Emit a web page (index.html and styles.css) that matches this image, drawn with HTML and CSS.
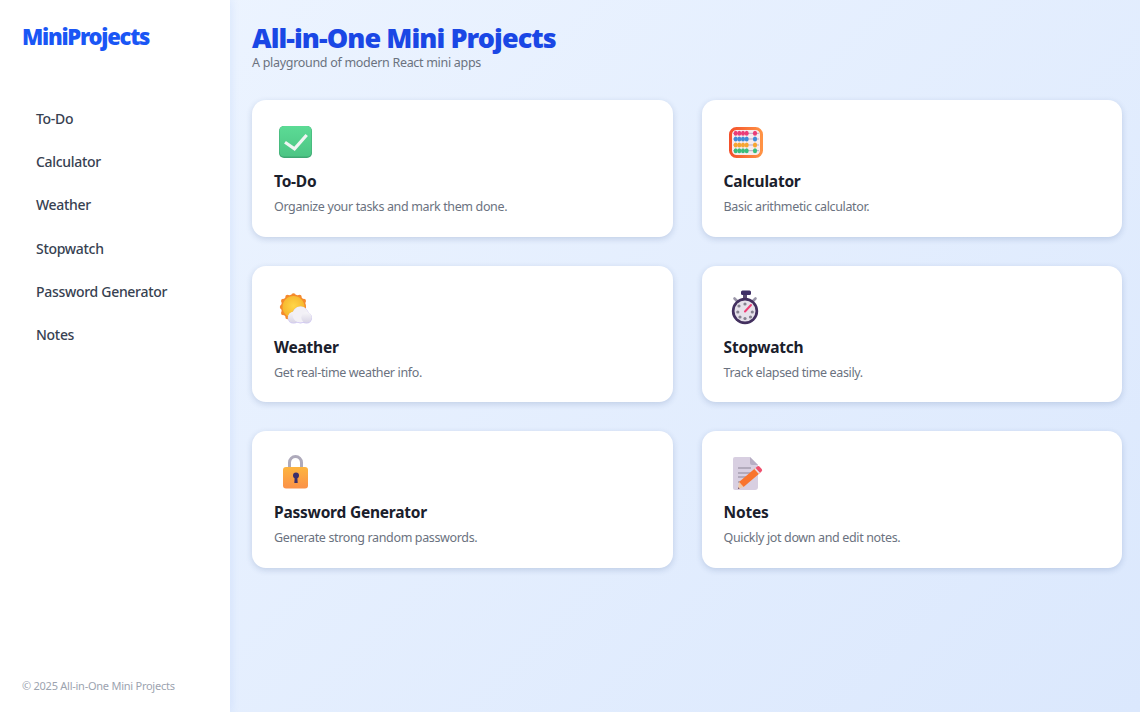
FILE: index.html
```html
<!DOCTYPE html>
<html lang="en">
<head>
    <meta charset="UTF-8">
    <meta name="viewport" content="width=device-width, initial-scale=1.0">
    <title>All-in-One Mini Projects</title>
    <link rel="stylesheet" href="styles.css">
</head>
<body>
    <aside class="sidebar">
        <div class="logo">MiniProjects</div>
        <nav class="nav">
            <a href="#">To-Do</a>
            <a href="#">Calculator</a>
            <a href="#">Weather</a>
            <a href="#">Stopwatch</a>
            <a href="#">Password Generator</a>
            <a href="#">Notes</a>
        </nav>
        <div class="copy">© 2025 All-in-One Mini Projects</div>
    </aside>
    <main class="main">
        <h1>All-in-One Mini Projects</h1>
        <p class="sub">A playground of modern React mini apps</p>
        <div class="grid">
            <div class="card">
                <svg class="icon" viewBox="0 0 36 36">
                    <defs>
                        <linearGradient id="g1" x1="0" y1="0" x2="0" y2="1"><stop offset="0" stop-color="#5cdb95"/><stop offset="1" stop-color="#4cc584"/></linearGradient>
                    </defs>
                    <rect x="1" y="2" width="33" height="32" rx="5" fill="#3fa873"/>
                    <rect x="1.5" y="2" width="32" height="30.5" rx="4.5" fill="url(#g1)"/>
                    <path d="M7 18.3l9.5 6.5L28.7 11" fill="none" stroke="#f1f5f3" stroke-width="3.2"/>
                </svg>
                <h3>To-Do</h3>
                <p>Organize your tasks and mark them done.</p>
            </div>
            <div class="card">
                <svg class="icon" viewBox="0 0 36 36">
                    <defs>
                        <linearGradient id="g2" x1="0" y1="0" x2="1" y2="0"><stop offset="0" stop-color="#f4512b"/><stop offset="1" stop-color="#ff9345"/></linearGradient>
                    </defs>
                    <rect x="2.5" y="4.5" width="31" height="28" rx="6" fill="#f7ecef" stroke="url(#g2)" stroke-width="3"/>
                    <g stroke="#b9a9c9" stroke-width="1"><path d="M5 9.3h26M5 15h26M5 21h26M5 26.7h26"/></g>
                    <g fill="#ea3c78"><ellipse cx="7.7" cy="9.3" rx="2" ry="2.5"/><ellipse cx="11.3" cy="9.3" rx="2" ry="2.5"/><ellipse cx="15" cy="9.3" rx="2" ry="2.5"/><ellipse cx="18.7" cy="9.3" rx="2" ry="2.5"/><ellipse cx="27" cy="9.3" rx="2.1" ry="2.5"/></g>
                    <g fill="#3f8bd8"><ellipse cx="7.7" cy="15" rx="2" ry="2.5"/><ellipse cx="11.3" cy="15" rx="2" ry="2.5"/><ellipse cx="15" cy="15" rx="2" ry="2.5"/><ellipse cx="18.7" cy="15" rx="2" ry="2.5"/><ellipse cx="27" cy="15" rx="2.1" ry="2.5"/></g>
                    <g fill="#f6a531"><ellipse cx="7.7" cy="21" rx="2" ry="2.5"/><ellipse cx="11.3" cy="21" rx="2" ry="2.5"/><ellipse cx="15" cy="21" rx="2" ry="2.5"/><ellipse cx="18.7" cy="21" rx="2" ry="2.5"/><ellipse cx="27" cy="21" rx="2.1" ry="2.5"/></g>
                    <g fill="#39bd7c"><ellipse cx="7.7" cy="26.7" rx="2" ry="2.5"/><ellipse cx="11.3" cy="26.7" rx="2" ry="2.5"/><ellipse cx="15" cy="26.7" rx="2" ry="2.5"/><ellipse cx="18.7" cy="26.7" rx="2" ry="2.5"/><ellipse cx="27" cy="26.7" rx="2.1" ry="2.5"/></g>
                </svg>
                <h3>Calculator</h3>
                <p>Basic arithmetic calculator.</p>
            </div>
            <div class="card">
                <svg class="icon" viewBox="0 0 36 36">
                    <defs>
                        <radialGradient id="g3" cx=".5" cy=".45" r=".55"><stop offset="0" stop-color="#ffd648"/><stop offset="1" stop-color="#f6b52c"/></radialGradient>
                        <linearGradient id="g4" x1="0" y1="0" x2="0" y2="1"><stop offset="0" stop-color="#f6f5f8"/><stop offset="1" stop-color="#d9d5e6"/></linearGradient>
                    </defs>
                    <g fill="#f58a2c"><circle cx="15.5" cy="17" r="12.5"/><circle cx="15.5" cy="5.5" r="2.2"/><circle cx="21.5" cy="7" r="2.2"/><circle cx="25.8" cy="11" r="2.2"/><circle cx="9.5" cy="7" r="2.2"/><circle cx="5.2" cy="11" r="2.2"/><circle cx="4" cy="17" r="2.2"/><circle cx="5.2" cy="23" r="2.2"/><circle cx="9.5" cy="27" r="2.2"/></g>
                    <circle cx="15.5" cy="17" r="11" fill="url(#g3)"/>
                    <circle cx="15.5" cy="27.8" r="5.8" fill="#cfc6f2"/>
                    <circle cx="22.5" cy="25" r="8.4" fill="#cfc6f2"/>
                    <circle cx="28.5" cy="28" r="5.6" fill="#cfc6f2"/>
                    <circle cx="15.5" cy="27.3" r="5.5" fill="url(#g4)"/>
                    <circle cx="22.5" cy="24.6" r="8" fill="#f2f0f6"/>
                    <circle cx="28.5" cy="27.5" r="5.2" fill="url(#g4)"/>
                </svg>
                <h3>Weather</h3>
                <p>Get real-time weather info.</p>
            </div>
            <div class="card">
                <svg class="icon" viewBox="0 0 36 36">
                    <g stroke="#9a96a8" stroke-width="2.6" stroke-linecap="round"><path d="M6.5 8.5l2.5 2.5M27.5 8.5l-2.5 2.5"/></g>
                    <rect x="15" y="3" width="4" height="6" fill="#5b4b72"/>
                    <rect x="13" y="0.5" width="10" height="4.5" rx="1.5" fill="#3f2f66"/>
                    <circle cx="17" cy="21" r="13.2" fill="#43305f"/>
                    <circle cx="17" cy="21" r="10.5" fill="#e6e1ea"/>
                    <g fill="#86828f"><circle cx="17" cy="14" r="1.6"/><circle cx="11" cy="16" r="1.6"/><circle cx="9.8" cy="22" r="1.6"/><circle cx="12" cy="27" r="1.6"/><circle cx="17" cy="28.5" r="1.6"/><circle cx="22.5" cy="27" r="1.6"/><circle cx="24.3" cy="22" r="1.6"/></g>
                    <path d="M17 21.5L23 15" stroke="#ee3f75" stroke-width="2" stroke-linecap="round"/>
                </svg>
                <h3>Stopwatch</h3>
                <p>Track elapsed time easily.</p>
            </div>
            <div class="card">
                <svg class="icon" viewBox="0 0 36 36">
                    <defs>
                        <linearGradient id="g5" x1="0" y1="0" x2="0" y2="1"><stop offset="0" stop-color="#fdb53f"/><stop offset="1" stop-color="#fb9148"/></linearGradient>
                    </defs>
                    <path d="M11.5 14V7.5a6 6 0 0 1 12 0V14" fill="none" stroke="#aeaabb" stroke-width="3"/>
                    <rect x="5" y="12" width="25" height="21.5" rx="3" fill="url(#g5)"/>
                    <circle cx="18" cy="20.5" r="3" fill="#3c2f6b"/>
                    <path d="M16.8 21h2.4l.5 7h-3.4z" fill="#3c2f6b"/>
                </svg>
                <h3>Password Generator</h3>
                <p>Generate strong random passwords.</p>
            </div>
            <div class="card">
                <svg class="icon" viewBox="0 0 36 36">
                    <path d="M5 4a2 2 0 0 1 2-2h15l8 8v22a3 3 0 0 1-3 3H7a2 2 0 0 1-2-2z" fill="#d8cfe1"/>
                    <path d="M22 2l8 8h-6a2 2 0 0 1-2-2z" fill="#b7aec4"/>
                    <path d="M10 13h13M10 18h14M10 22h10M10 27h5" stroke="#8b8598" stroke-width="1.2"/>
                    <path d="M11 27L27.5 13l4.5 5-16.5 14z" fill="#f9742e"/>
                    <path d="M27.5 13l1.7-1.4a1.8 1.8 0 0 1 2.5.2l2 2.3a1.8 1.8 0 0 1-.2 2.5L32 18z" fill="#f0506e"/>
                    <path d="M27.5 13l4.5 5-1.2 1-4.5-5z" fill="#e9dfe6"/>
                    <path d="M11 27l4.5 5-5.5 2z" fill="#f3c9a4"/>
                    <path d="M10.4 32.2l1.2 1.2-1.6.6z" fill="#5b3a5e"/>
                </svg>
                <h3>Notes</h3>
                <p>Quickly jot down and edit notes.</p>
            </div>
        </div>
    </main>
</body>
</html>
```

FILE: styles.css
```css
* {
    box-sizing: border-box;
}

html, body {
    height: 100%;
}

body {
    margin: 0;
    display: flex;
    font-family: "Noto Sans", "Open Sans", sans-serif;
    background: linear-gradient(135deg, #eef5ff 0%, #dbe8fd 100%);
    overflow: hidden;
}

.sidebar {
    width: 230px;
    flex-shrink: 0;
    background: #fff;
    box-shadow: 2px 0 8px rgba(37, 99, 235, 0.08);
    padding: 22px 22px 18px;
    display: flex;
    flex-direction: column;
}

.logo {
    font-size: 22px;
    line-height: 28px;
    font-weight: 900;
    letter-spacing: -1.25px;
    color: #1a56f5;
}

.nav {
    margin-top: 47px;
    padding-left: 14px;
    display: flex;
    flex-direction: column;
    flex: 1;
}

.nav a {
    height: 43.2px;
    line-height: 43px;
    font-size: 14px;
    font-weight: 500;
    letter-spacing: -0.3px;
    color: #374151;
    text-decoration: none;
}

.copy {
    font-size: 11px;
    line-height: 16px;
    letter-spacing: -0.25px;
    color: #9ca3af;
}

.main {
    flex: 1;
    padding: 22px 17.6px 0 22px;
}

h1 {
    margin: 0;
    font-size: 27px;
    line-height: 32px;
    font-weight: 900;
    letter-spacing: -0.92px;
    color: #1a47e5;
}

.sub {
    margin: 0;
    font-size: 12.5px;
    line-height: 17px;
    letter-spacing: -0.3px;
    color: #6b7280;
}

.grid {
    margin-top: 29px;
    display: grid;
    grid-template-columns: 1fr 1fr;
    gap: 28.8px;
}

.card {
    height: 136.8px;
    padding: 22px;
    background: #fff;
    border-radius: 14px;
    box-shadow: 0 2px 6px rgba(30, 60, 120, 0.18);
}

.icon {
    display: block;
    width: 36px;
    height: 36px;
    margin-left: 4px;
    margin-top: 2px;
}

h3 {
    margin: 10px 0 0;
    font-size: 15.5px;
    line-height: 22px;
    font-weight: 700;
    letter-spacing: -0.22px;
    color: #1a202c;
}

.card p {
    margin: 6px 0 0;
    font-size: 12.5px;
    line-height: 17px;
    letter-spacing: -0.36px;
    color: #6b7280;
}
```
